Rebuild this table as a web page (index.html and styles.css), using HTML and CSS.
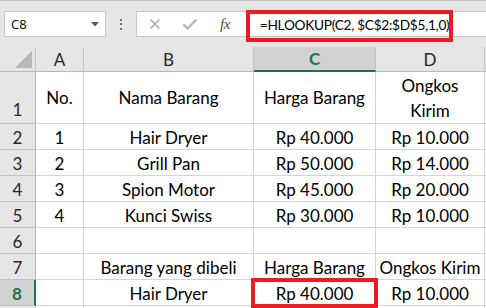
FILE: index.html
```html
<!DOCTYPE html>
<html>
<head>
<meta charset="utf-8">
<link rel="stylesheet" href="styles.css">
</head>
<body>
<div class="app">
  <div class="fbar">
    <div class="namebox">
      <span class="nb-text">C8</span>
      <svg class="nb-arrow" width="8" height="5" viewBox="0 0 8 5"><path d="M0 0H8L4 4.5Z" fill="#5a5a5a"/></svg>
    </div>
    <div class="dots"><i></i><i></i><i></i></div>
    <div class="fbox">
      <svg class="ico ico-x" width="12" height="12" viewBox="0 0 12 12"><path d="M1.5 1.5L10.5 10.5M10.5 1.5L1.5 10.5" stroke="#a8a8a8" stroke-width="1.5" fill="none"/></svg>
      <svg class="ico ico-check" width="16" height="12" viewBox="0 0 16 12"><path d="M1.5 6.5L5.5 10.5L14.5 1.5" stroke="#b4b4b4" stroke-width="2.2" fill="none"/></svg>
      <span class="ico-fx">fx</span>
      <span class="formula">=HLOOKUP(C2, $C$2:$D$5,1,0)</span>
    </div>
  </div>
  <div class="sheet">
    <div class="hd corner"><span class="tri"></span></div>
    <div class="hd col">A</div>
    <div class="hd col">B</div>
    <div class="hd col sel-col">C</div>
    <div class="hd col">D</div>
    <div class="hd col end"></div>

    <div class="hd row row-tall">1</div>
    <div class="c tall">No.</div>
    <div class="c tall">Nama Barang</div>
    <div class="c tall">Harga Barang</div>
    <div class="c tall wrap">Ongkos Kirim</div>
    <div class="c tall end"></div>

    <div class="hd row">2</div>
    <div class="c">1</div>
    <div class="c">Hair Dryer</div>
    <div class="c">Rp 40.000</div>
    <div class="c">Rp 10.000</div>
    <div class="c end"></div>

    <div class="hd row">3</div>
    <div class="c">2</div>
    <div class="c">Grill Pan</div>
    <div class="c">Rp 50.000</div>
    <div class="c">Rp 14.000</div>
    <div class="c end"></div>

    <div class="hd row">4</div>
    <div class="c">3</div>
    <div class="c">Spion Motor</div>
    <div class="c">Rp 45.000</div>
    <div class="c">Rp 20.000</div>
    <div class="c end"></div>

    <div class="hd row">5</div>
    <div class="c">4</div>
    <div class="c">Kunci Swiss</div>
    <div class="c">Rp 30.000</div>
    <div class="c">Rp 10.000</div>
    <div class="c end"></div>

    <div class="hd row">6</div>
    <div class="c"></div>
    <div class="c"></div>
    <div class="c"></div>
    <div class="c"></div>
    <div class="c end"></div>

    <div class="hd row">7</div>
    <div class="c"></div>
    <div class="c">Barang yang dibeli</div>
    <div class="c">Harga Barang</div>
    <div class="c">Ongkos Kirim</div>
    <div class="c end"></div>

    <div class="hd row sel-row">8</div>
    <div class="c"></div>
    <div class="c">Hair Dryer</div>
    <div class="c">Rp 40.000</div>
    <div class="c">Rp 10.000</div>
    <div class="c end"></div>

    <div class="hd row"></div>
    <div class="c"></div>
    <div class="c"></div>
    <div class="c"></div>
    <div class="c"></div>
    <div class="c end"></div>
  </div>
  <div class="mark mark-formula"></div>
  <div class="mark mark-cell"></div>
</div>
</body>
</html>
```

FILE: styles.css
```css
* { box-sizing: border-box; }
html, body { margin: 0; padding: 0; }
body {
  width: 486px;
  height: 308px;
  overflow: hidden;
  background: #ffffff;
  font-family: Lato, "Liberation Sans", sans-serif;
}
.app {
  position: relative;
  width: 486px;
  height: 308px;
  overflow: hidden;
}
.fbar {
  height: 47px;
  background: #e6e6e6;
  border-top: 1px solid #c6c6c6;
  display: flex;
  align-items: flex-start;
  padding-top: 10px;
}
.namebox {
  margin-left: 4px;
  width: 102px;
  height: 26px;
  background: #fff;
  border: 1px solid #c6c6c6;
  display: flex;
  align-items: center;
  justify-content: space-between;
  padding: 0 6px 0 6px;
}
.nb-text {
  font-family: "Open Sans", "Noto Sans", sans-serif;
  font-size: 13px;
  color: #000;
}
.nb-arrow { display: block; margin-top: 1px; }
.dots {
  width: 30px;
  height: 26px;
  display: flex;
  flex-direction: column;
  align-items: center;
  justify-content: center;
  gap: 2.5px;
}
.dots i {
  display: block;
  width: 2px;
  height: 2px;
  background: #6e6e6e;
}
.fbox {
  flex: 1;
  height: 26px;
  background: #fff;
  border: 1px solid #c6c6c6;
  border-right: none;
  display: flex;
  align-items: center;
}
.ico { display: block; }
.ico-x { margin-left: 12px; }
.ico-check { margin-left: 21px; }
.ico-fx {
  margin-left: 22px;
  font-family: "Liberation Serif", "DejaVu Serif", serif;
  font-style: italic;
  font-size: 15px;
  color: #4a4a4a;
  letter-spacing: -0.5px;
}
.formula {
  margin-left: 30px;
  font-family: Lato, "Liberation Sans", sans-serif;
  font-size: 13.7px;
  letter-spacing: -0.3px;
  color: #000;
  white-space: nowrap;
}
.sheet {
  display: grid;
  grid-template-columns: 36px 48px 170px 122px 109px 1fr;
  grid-template-rows: 25px 52px repeat(8, 26px);
}
.hd {
  background: #e6e6e6;
  border-right: 1px solid #c4c4c4;
  border-bottom: 1px solid #b8b8b8;
  color: #262626;
  font-size: 17px;
  display: flex;
  align-items: center;
  justify-content: center;
}
.corner {
  position: relative;
  justify-content: flex-end;
  align-items: flex-end;
  padding: 0 3px 3px 0;
}
.tri {
  width: 0;
  height: 0;
  border-style: solid;
  border-width: 0 0 17px 17px;
  border-color: transparent transparent #b7b7b7 transparent;
}
.col { line-height: 24px; padding-top: 1px; }
.hd.end { border-right: none; }
.sel-col {
  background: #d2d2d2;
  color: #217346;
  font-weight: 700;
  border-bottom: 2px solid #217346;
}
.row {
  border-right: 1px solid #b8b8b8;
  border-bottom: 1px solid #c4c4c4;
  padding-top: 1px;
}
.row-tall {
  align-items: flex-end;
  padding-bottom: 3px;
}
.sel-row {
  background: #d2d2d2;
  color: #217346;
  font-weight: 700;
  border-right: 2px solid #217346;
}
.c {
  border-right: 1px solid #d4d4d4;
  border-bottom: 1px solid #d4d4d4;
  font-size: 17px;
  color: #000;
  display: flex;
  align-items: center;
  justify-content: center;
  text-align: center;
  line-height: 25px;
  white-space: nowrap;
  padding-top: 1px;
}
.c.tall { padding-top: 0; }
.c.wrap { white-space: normal; padding: 0 14px; }
.c.end { border-right: none; }
.mark {
  position: absolute;
  border: 4px solid #ed1c24;
  pointer-events: none;
}
.mark-formula {
  left: 246px;
  top: 10px;
  width: 207px;
  height: 32px;
}
.mark-cell {
  left: 251px;
  top: 278px;
  width: 127px;
  height: 30px;
}
```
